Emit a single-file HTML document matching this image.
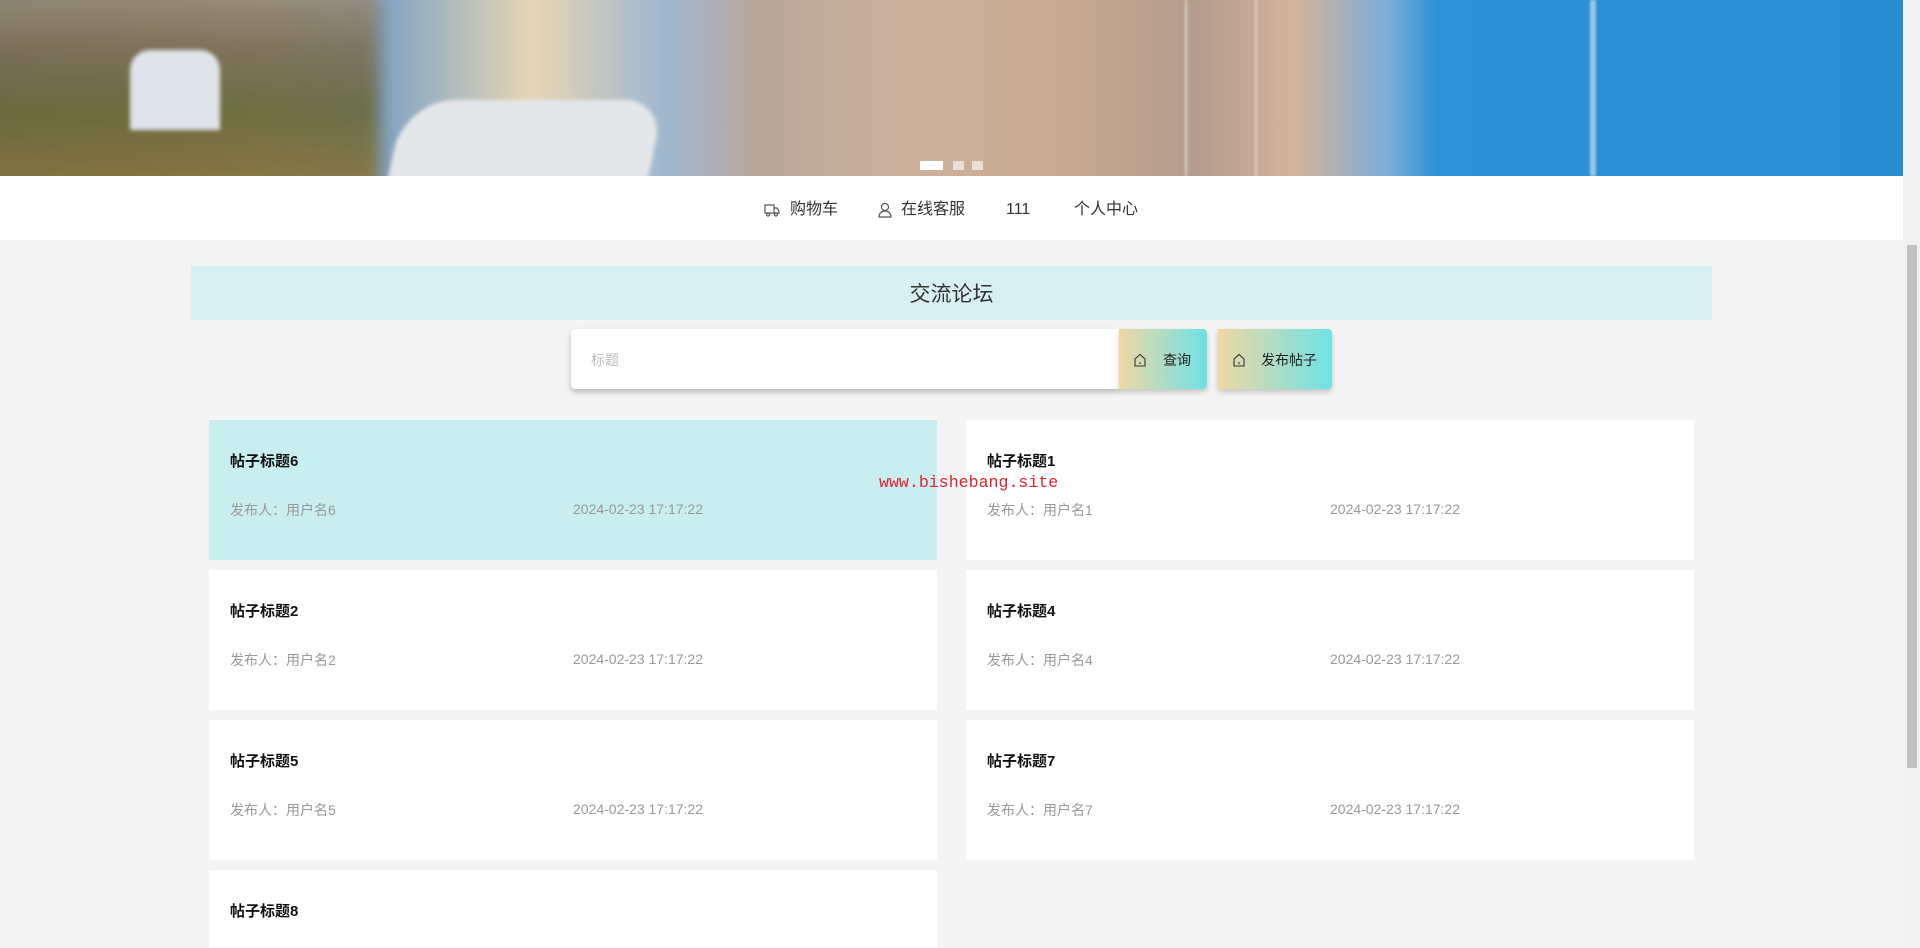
<!DOCTYPE html>
<html><head><meta charset="utf-8">
<style>
*{margin:0;padding:0;box-sizing:border-box}
html,body{width:1920px;height:948px;overflow:hidden}
body{background:#f4f4f4;font-family:"Liberation Sans","Noto Sans CJK SC",sans-serif;position:relative}
.banner{position:absolute;left:0;top:0;width:1903px;height:176px;overflow:hidden;
background:linear-gradient(90deg,#6b6a50 0%,#8a7a52 8%,#a49a70 14%,#7fa3c4 20%,#e6d6b3 28%,#9fb7cf 35%,#b9a79a 40%,#cdb19b 48%,#c8a98f 56%,#b49d8e 63%,#d4b39a 68%,#7aaed8 73%,#2f91d6 75.5%,#2a8cd3 100%)}
.banner .l{position:absolute;left:-20px;top:-10px;width:400px;height:200px;background:linear-gradient(180deg,#9a8f80 0%,#7c705a 30%,#6a6a3e 60%,#8a7440 100%);filter:blur(8px);opacity:.9}
.banner .boat{position:absolute;left:395px;top:100px;width:260px;height:90px;background:#e4e7ea;border-radius:50px 40px 0 0;transform:skewX(-12deg);filter:blur(2px)}
.banner .boat2{position:absolute;left:130px;top:50px;width:90px;height:80px;background:#dfe4ea;border-radius:20px 20px 0 0;filter:blur(2px)}
.banner .p{position:absolute;top:0;height:176px;background:rgba(255,255,255,.5);filter:blur(1px)}
.dot{position:absolute;top:161px;height:9px;background:rgba(255,255,255,.6)}
.nav{position:absolute;left:0;top:176px;width:1903px;height:64px;background:#fff;font-size:16px;color:#333}
.nav span{position:absolute;top:24px;line-height:20px}
.titlebar{position:absolute;left:191px;top:266px;width:1521px;height:54px;background:#d8f0f2;text-align:center;line-height:58px;font-size:21px;color:#333}
.search{position:absolute;left:571px;top:329px;width:548px;height:60px;background:#fff;border-radius:4px 0 0 4px;box-shadow:0 3px 6px rgba(0,0,0,.25)}
.search span{position:absolute;left:20px;top:21px;font-size:14px;color:#bbb}
.btn{position:absolute;top:329px;height:60px;background:linear-gradient(90deg,#f0d8a2,#6de2e6);border-radius:0 4px 4px 0;font-size:14px;color:#222;line-height:62px;box-shadow:0 3px 6px rgba(0,0,0,.2)}
.btn svg{position:absolute;left:14px;top:24px}
.card{position:absolute;width:728px;height:140px;background:#fff}
.card b{position:absolute;left:21px;top:30px;font-size:15px;color:#111}
.card i{position:absolute;left:21px;top:80px;font-style:normal;font-size:14px;color:#999}
.card em{position:absolute;left:364px;top:81px;font-style:normal;font-size:14px;color:#999}
.wm{position:absolute;left:879px;top:473px;font-family:"Liberation Mono",monospace;font-size:16.6px;color:#e0242f}
.sb{position:absolute;right:0;top:0;width:17px;height:948px;background:#f1f1f1}
.sb div{position:absolute;left:4px;top:245px;width:10px;height:523px;background:#c1c1c1}
</style></head><body>
<div class="banner">
<div class="l"></div>
<div class="boat2"></div>
<div class="p" style="left:1590px;width:6px"></div>
<div class="p" style="left:1185px;width:2px"></div>
<div class="p" style="left:1255px;width:2px"></div>
<div class="boat"></div>
<div class="dot" style="left:920px;width:23px;background:#fff"></div>
<div class="dot" style="left:953px;width:11px"></div>
<div class="dot" style="left:972px;width:11px"></div>
</div>
<div class="nav">
<svg style="position:absolute;left:764px;top:27px" width="16" height="14" viewBox="0 0 16 14" fill="none" stroke="#555" stroke-width="1.2"><rect x="1" y="2" width="9" height="8"/><path d="M10 5h3l2 3v2h-5"/><circle cx="4" cy="11.5" r="1.5"/><circle cx="12" cy="11.5" r="1.5"/></svg>
<span style="left:790px">购物车</span>
<svg style="position:absolute;left:878px;top:26px" width="14" height="16" viewBox="0 0 14 16" fill="none" stroke="#555" stroke-width="1.2"><circle cx="7" cy="5" r="3.5"/><path d="M1 15c0-4 3-6 6-6s6 2 6 6z"/></svg>
<span style="left:901px">在线客服</span>
<span style="left:1006px">111</span>
<span style="left:1074px">个人中心</span>
</div>
<div class="titlebar">交流论坛</div>
<div class="search"><span>标题</span></div>
<div class="btn" style="left:1119px;width:88px"><svg width="14" height="14" viewBox="0 0 14 14" fill="none" stroke="#333" stroke-width="1.1"><path d="M2 6L7 1.5 12 6V13H2z"/><path d="M6 10h2"/></svg><span style="position:absolute;left:44px">查询</span></div>
<div class="btn" style="left:1218px;width:114px"><svg width="14" height="14" viewBox="0 0 14 14" fill="none" stroke="#333" stroke-width="1.1"><path d="M2 6L7 1.5 12 6V13H2z"/><path d="M6 10h2"/></svg><span style="position:absolute;left:43px">发布帖子</span></div>

<div class="card" style="left:209px;top:420px;background:#c8eef0"><b>帖子标题6</b><i>发布人：用户名6</i><em>2024-02-23 17:17:22</em></div>
<div class="card" style="left:966px;top:420px"><b>帖子标题1</b><i>发布人：用户名1</i><em>2024-02-23 17:17:22</em></div>
<div class="card" style="left:209px;top:570px"><b>帖子标题2</b><i>发布人：用户名2</i><em>2024-02-23 17:17:22</em></div>
<div class="card" style="left:966px;top:570px"><b>帖子标题4</b><i>发布人：用户名4</i><em>2024-02-23 17:17:22</em></div>
<div class="card" style="left:209px;top:720px"><b>帖子标题5</b><i>发布人：用户名5</i><em>2024-02-23 17:17:22</em></div>
<div class="card" style="left:966px;top:720px"><b>帖子标题7</b><i>发布人：用户名7</i><em>2024-02-23 17:17:22</em></div>
<div class="card" style="left:209px;top:870px;height:78px"><b>帖子标题8</b></div>
<div class="wm">www.bishebang.site</div>
<div class="sb"><div></div></div>
</body></html>
